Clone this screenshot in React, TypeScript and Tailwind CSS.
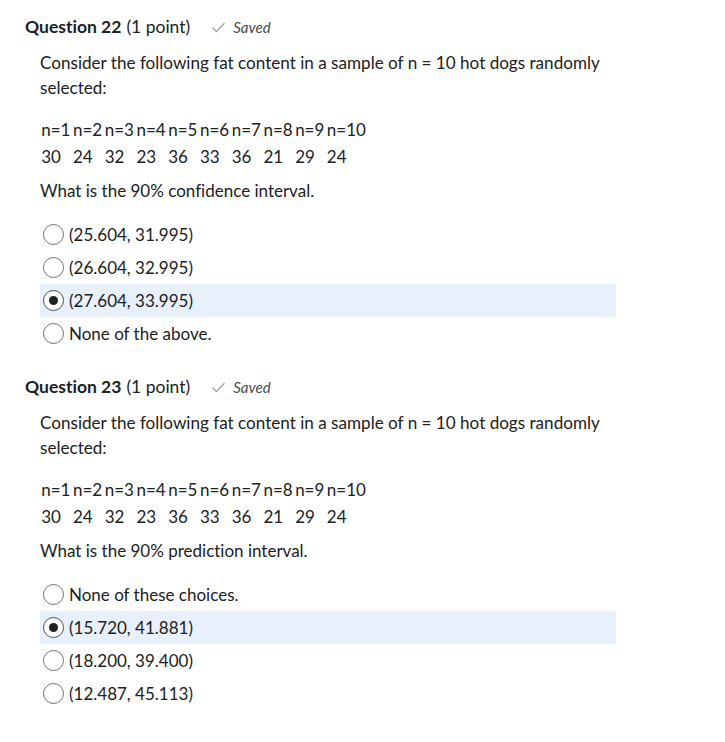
const QUESTIONS = [
  {
    num: 22,
    ask: "What is the 90% confidence interval.",
    options: ["(25.604, 31.995)", "(26.604, 32.995)", "(27.604, 33.995)", "None of the above."],
    selected: 2,
  },
  {
    num: 23,
    ask: "What is the 90% prediction interval.",
    options: ["None of these choices.", "(15.720, 41.881)", "(18.200, 39.400)", "(12.487, 45.113)"],
    selected: 1,
  },
];

const VALUES = [30, 24, 32, 23, 36, 33, 36, 21, 29, 24];

function Radio({ checked }: { checked: boolean }) {
  return (
    <span
      className={`flex h-[21px] w-[21px] shrink-0 items-center justify-center rounded-full border bg-white ${
        checked ? "border-[#494c4e]" : "border-[#6e7376]"
      }`}
    >
      {checked && <span className="h-[9px] w-[9px] rounded-full bg-[#202122]" />}
    </span>
  );
}

function Question({ q }: { q: (typeof QUESTIONS)[number] }) {
  return (
    <div className="flex flex-col">
      <div className="flex h-[24px] items-center text-[17.5px]">
        <span className="font-bold">Question {q.num}</span>
        <span className="ml-[5px]">(1 point)</span>
        <span className="ml-[22px] flex items-center gap-[8px] text-[15px] italic text-[#494c4e]">
          <svg width="13" height="11" viewBox="0 0 13 11" fill="none">
            <path d="M1 6l3.5 3.5L12 1.5" stroke="#a6abae" strokeWidth="1.6" strokeLinecap="round" strokeLinejoin="round" />
          </svg>
          Saved
        </span>
      </div>
      <div className="mt-[11px] flex w-[591px] flex-col pl-[15px] text-[17px]">
        <p className="text-[17.1px] leading-[25px]">
          Consider the following fat content in a sample of n = 10 hot dogs randomly selected:
        </p>
        <table className="mt-[16px] self-start border-collapse leading-[23px]">
          <tbody>
            <tr>
              {VALUES.map((_, i) => (
                <td key={`h-${i}`} className="px-[1.25px] py-[2px] text-left">n={i + 1}</td>
              ))}
            </tr>
            <tr>
              {VALUES.map((v, i) => (
                <td key={`v-${i}`} className="px-[1.25px] py-[2px] text-left">{v}</td>
              ))}
            </tr>
          </tbody>
        </table>
        <p className="mt-[8px] leading-[25px]">{q.ask}</p>
        <div className="mt-[15px] flex flex-col">
          {q.options.map((opt, i) => (
            <div
              key={opt}
              className={`flex h-[33px] items-center gap-[5px] pl-[3px] ${
                i === q.selected ? "bg-[#e7f0fb]" : ""
              }`}
            >
              <Radio checked={i === q.selected} />
              <span>{opt}</span>
            </div>
          ))}
        </div>
      </div>
    </div>
  );
}

export default function App() {
  return (
    <div className="min-h-[742px] w-[725px] bg-white pl-[25px] pt-[15px] font-['Lato',sans-serif] text-[#202122] [font-variant-ligatures:none]">
      <div className="flex flex-col gap-[25px]">
        {QUESTIONS.map((q) => (
          <Question key={q.num} q={q} />
        ))}
      </div>
    </div>
  );
}
